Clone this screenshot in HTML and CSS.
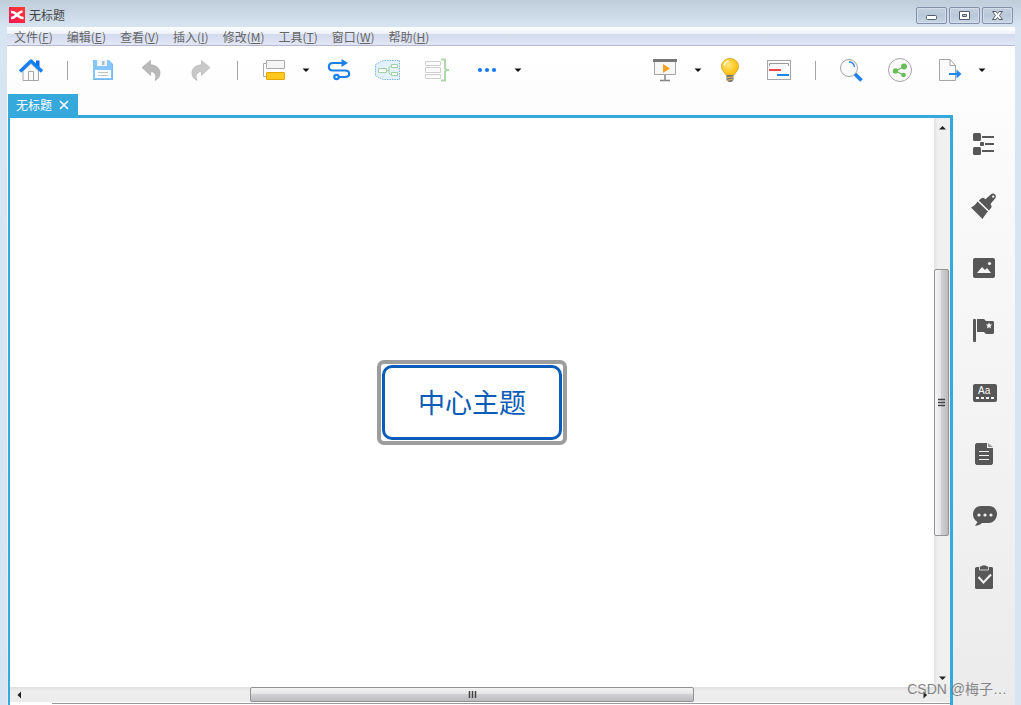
FILE: index.html
```html
<!DOCTYPE html>
<html lang="zh-CN">
<head>
<meta charset="utf-8">
<title>无标题</title>
<link rel="stylesheet" href="styles.css">
</head>
<body class="window">
<header class="titlebar">
  <svg class="logo" viewBox="0 0 16 16" aria-hidden="true"><defs><linearGradient id="lg" x1="0" x2="1" y1="1" y2="0"><stop offset="0" stop-color="#ff1456"/><stop offset="1" stop-color="#fb3a2c"/></linearGradient></defs><rect width="16" height="16" fill="url(#lg)"/><path d="M2 5c3-.5 4 1 6 2.800S11 11 14.500 11M13.500 4.500C11 4.500 9.500 6.500 8 7.800S5 11 2 11" fill="none" stroke="#fff" stroke-width="2.600"/></svg>
  <h1 class="title">无标题</h1>
  <div class="winbtns">
    <button class="winbtn" aria-label="最小化"><svg viewBox="0 0 15 13"><rect x="2.500" y="6.500" width="10" height="4" rx="1" fill="#fff" stroke="#555b6b"/></svg></button>
    <button class="winbtn" aria-label="最大化"><svg viewBox="0 0 15 13"><path d="M2.500 2.500h10v8h-10z" fill="#fff" stroke="#555b6b"/><path d="M5.500 5.500h4v2h-4z" fill="#b5c3d3" stroke="#555b6b"/></svg></button>
    <button class="winbtn" aria-label="关闭"><svg viewBox="0 0 15 13"><path d="M2.500 2.500h3.500l1.500 2 1.500-2h3.500l-3 4 3 4H9l-1.500-2-1.500 2H2.500l3-4z" fill="#fff" stroke="#555b6b"/></svg></button>
  </div>
</header>

<div class="app">
<nav class="menubar">
  <button class="menu">文件(<u>F</u>)</button>
  <button class="menu">编辑(<u>E</u>)</button>
  <button class="menu">查看(<u>V</u>)</button>
  <button class="menu">插入(<u>I</u>)</button>
  <button class="menu">修改(<u>M</u>)</button>
  <button class="menu">工具(<u>T</u>)</button>
  <button class="menu">窗口(<u>W</u>)</button>
  <button class="menu">帮助(<u>H</u>)</button>
</nav>

<div class="toolbar">
  <button class="tool" aria-label="主页"><svg viewBox="0 0 27 27"><path d="M5 14v9.500h15.500V14L13 6.500z" fill="#fafafa" stroke="#a8a8a8"/><path d="M10.500 23.500v-9h5v9" fill="none" stroke="#a8a8a8"/><path d="M18 3.500h3.500v6.500H18z" fill="#0f6be8"/><path d="M2 14.500 13 4l11 10.500" fill="none" stroke="#1580f4" stroke-width="3.400" stroke-linejoin="round"/></svg></button>
  <span class="sep"></span>
  <button class="tool" aria-label="保存"><svg viewBox="0 0 27 27"><path d="M3 3h16l4 4v16H3z" fill="#85c5fc"/><path d="M3.500 22.500h19V7" fill="none" stroke="#78b8f2"/><path d="M7 3h10v6H7z" fill="#eef7ff"/><path d="M12 4h2.500v4H12z" fill="#b9b9bb"/><path d="M5 13h16v8H5z" fill="#fff"/><path d="M8 15.500h10M8 18.500h10" stroke="#c3c3c3"/></svg></button>
  <button class="tool" aria-label="撤销"><svg viewBox="0 0 27 27"><path d="M3 10.500 11.500 3.500v4.300c6 .4 9.500 3.500 9.500 8.200 0 3-1.500 6-5 7.500 1.800-4.500.8-8.500-4.500-9v4z" fill="#bababa" stroke="#a9a9a9" stroke-width=".7"/></svg></button>
  <button class="tool" aria-label="重做"><svg viewBox="0 0 27 27"><path d="M22 10.500 13.500 3.500v4.300C7.500 8.200 4 11.300 4 16c0 3 1.500 6 5 7.500-1.800-4.500-.8-8.500 4.500-9v4z" fill="#c9c9c9" stroke="#b5b5b5" stroke-width=".7"/></svg></button>
  <span class="sep"></span>
  <button class="tool" aria-label="主题"><svg viewBox="0 0 27 27"><path d="M6 6.500H3.500v13H6" fill="none" stroke="#aaa"/><rect x="6.500" y="3.500" width="18" height="8" rx=".5" fill="#f5f5f5" stroke="#a8a8a8"/><rect x="6.500" y="15.500" width="18" height="7" rx=".5" fill="#ffc91f" stroke="#e9a500"/></svg></button>
  <button class="caret" aria-label="主题选项"><svg viewBox="0 0 8 5"><path d="M.5 .5h7L4 4z"/></svg></button>
  <button class="tool" aria-label="联系"><svg viewBox="0 0 27 27"><g fill="none" stroke="#1c80ea" stroke-width="2.200"><path d="M18 6H8c-5.500 0-5.500 7.500 0 7.500h12c5.500 0 5.500 6.500 0 6.500h-6"/><circle cx="11.500" cy="20" r="2.200"/></g><path d="M16.500 2l6.500 4-6.500 4z" fill="#1c80ea"/></svg></button>
  <button class="tool" aria-label="外框"><svg viewBox="0 0 27 27"><path d="M1.500 7.500 9 3.500h16.500v19H9L1.500 19z" fill="#e3f1fc" stroke="#7fb4e8" stroke-dasharray="1.500 1"/><g fill="#f7fcf8" stroke="#a0d0a2"><path d="M4.500 11.500h8v4h-8zM17.500 7.500h6v3h-6zM17.500 15.500h6v3h-6z"/><path d="M12.500 13.500h2.500M17.500 9h-1l-1.500 1.500V16l1.500 1.500h1" fill="none"/></g></svg></button>
  <button class="tool" aria-label="概要"><svg viewBox="0 0 27 27"><path d="M2.500 4.500h15v4h-15zM2.500 10.500h15v5h-15zM2.500 17.500h15v4h-15z" fill="#fbfbfb" stroke="#cfcfcf"/><path d="M18 2.500h4V11l1 2h3M18 23.500h4V15l1-2" fill="none" stroke="#acd8ac" stroke-width="2"/></svg></button>
  <button class="tool" aria-label="更多"><svg viewBox="0 0 27 27" fill="#1678ee"><circle cx="8" cy="13" r="2.100"/><circle cx="15" cy="13" r="2.100"/><circle cx="22" cy="13" r="2.100"/></svg></button>
  <button class="caret" aria-label="更多选项"><svg viewBox="0 0 8 5"><path d="M.5 .5h7L4 4z"/></svg></button>
  <span class="spring"></span>
  <button class="tool" aria-label="演示"><svg viewBox="0 0 27 27"><path d="M2.500 4.500h21v13h-21z" fill="#f7f7f7" stroke="#a4a4a4"/><path d="M1 2h24v3H1z" fill="#777"/><path d="M11 7l7 4.500-7 4.500z" fill="#f6a11f"/><path d="M13 18v5M8 23.500h10" stroke="#858585" stroke-width="1.500"/></svg></button>
  <button class="caret" aria-label="演示选项"><svg viewBox="0 0 8 5"><path d="M.5 .5h7L4 4z"/></svg></button>
  <button class="tool" aria-label="头脑风暴"><svg viewBox="0 0 27 27"><defs><radialGradient id="bg" cx=".4" cy=".4"><stop offset="0" stop-color="#ffe67a"/><stop offset="1" stop-color="#fdc41a"/></radialGradient></defs><path d="M13 1.500c-5 0-8.500 3.700-8.500 8 0 4 3 5.500 4.500 8.500h8c1.500-3 4.500-4.500 4.500-8.500 0-4.300-3.500-8-8.500-8z" fill="url(#bg)" stroke="#d9ac2c"/><path d="M7 8.500c.5-2.500 2-3.700 4.500-4.500" fill="none" stroke="#fff6cd" stroke-width="1.500"/><path d="M9.500 18h7v5l-2 2h-3l-2-2z" fill="#777"/><path d="m9 21 8-1.500M9.500 23.500l7-1.500" stroke="#e0be5c"/></svg></button>
  <button class="tool" aria-label="甘特图"><svg viewBox="0 0 27 27"><rect x="1.500" y="3.500" width="23" height="19" fill="#fbfbfb" stroke="#a5a5a5"/><path d="M3.500 9V6.500h19V9" fill="none" stroke="#999"/><path d="M3 13h12" stroke="#f14848" stroke-width="2"/><path d="M11 18h12" stroke="#1e86f0" stroke-width="2"/></svg></button>
  <span class="sep"></span>
  <button class="tool" aria-label="搜索"><svg viewBox="0 0 27 27"><circle cx="11" cy="11" r="8.500" fill="#fafafa" stroke="#a5a5a5"/><path d="M11 5c3 0 5 2 5.500 5" fill="none" stroke="#2186ee" stroke-width="1.300"/><path d="m17 17 6.500 6.500" stroke="#2081ea" stroke-width="3.700"/></svg></button>
  <button class="tool" aria-label="分享"><svg viewBox="0 0 27 27"><circle cx="13" cy="13" r="11.500" fill="#fafafa" stroke="#a5a5a5"/><path d="M17 9.500 8.500 14l8 4" fill="none" stroke="#68bd58" stroke-width="1.200"/><g fill="#68bd58"><circle cx="17" cy="9.500" r="3"/><circle cx="8.500" cy="14" r="2.700"/><circle cx="16.500" cy="18" r="2.300"/></g></svg></button>
  <button class="tool" aria-label="导出"><svg viewBox="0 0 27 27"><path d="M3.500 2.500h10.500l5.500 6v15h-16zM14 2.500v6h5.500" fill="#fafafa" stroke="#a5a5a5"/><path d="M13 17h9" stroke="#2186ee" stroke-width="2"/><path d="m20.500 12.500 5 4.500-5 4.500z" fill="#2186ee"/></svg></button>
  <button class="caret" aria-label="导出选项"><svg viewBox="0 0 8 5"><path d="M.5 .5h7L4 4z"/></svg></button>
</div>

<div class="workspace">
  <main class="editor">
    <div class="tabs"><div class="tab"><span>无标题</span><button class="tab-close" aria-label="关闭标签"><svg viewBox="0 0 10 10"><path d="m1 1 8 8M9 1 1 9" stroke="#fff" stroke-width="1.700"/></svg></button></div></div>
    <div class="pane">
      <div class="canvas"><button class="selection"><span class="topic">中心主题</span></button></div>
      <div class="vbar">
        <button class="vstep" aria-label="向上"><svg viewBox="0 0 8 5"><path d="M1 4.500h7L4.500 1z"/></svg></button>
        <div class="track"><div class="vthumb"><svg viewBox="0 0 8 9"><path d="M0 1.500h7M0 4.500h7M0 7.500h7" stroke="#444" stroke-width="1.500"/></svg></div></div>
        <button class="vstep" aria-label="向下"><svg viewBox="0 0 8 5"><path d="M1 .5h7L4.500 4z"/></svg></button>
      </div>
      <div class="hbar">
        <button class="hstep" aria-label="向左"><svg viewBox="0 0 5 8"><path d="M4 .5v7L.5 4z"/></svg></button>
        <div class="track"><div class="hthumb"><svg viewBox="0 0 9 8"><path d="M1.500 0v7M4.500 0v7M7.500 0v7" stroke="#444" stroke-width="1.500"/></svg></div></div>
        <button class="hstep" aria-label="向右"><svg viewBox="0 0 5 8"><path d="M.5 .5v7L4 4z"/></svg></button>
      </div>
      <div class="corner"></div>
      <div class="sheets"></div>
    </div>
  </main>
  <aside class="sidebar">
    <button class="side" aria-label="大纲"><svg viewBox="0 0 28 28"><rect x="3" y="3" width="8" height="8" rx="1.500"/><rect x="3" y="17" width="8" height="8" rx="1.500"/><rect x="10" y="12" width="4" height="4" rx="1"/><path d="M12 6h12v2H12zM15 13h9v2h-9zM12 20h12v2H12z"/></svg></button>
    <button class="side" aria-label="格式"><svg viewBox="0 0 28 28"><path d="M1 15.500c3-1.500 5-3.500 6.500-6l10.500 10c-2 2-3.500 4.500-5.500 7.500z"/><path d="m8.800 8.500 2.700-2.300c1-.7 2-.7 3 .3l1 .8 5.500-5c2.500-2.300 6.500 1 4.300 4L20.500 12l.5 1c.8 1 .8 2 0 3L19 18.500z"/><circle cx="23.200" cy="4.600" r="1.200" fill="#f9f9f9"/></svg></button>
    <button class="side" aria-label="图片"><svg viewBox="0 0 28 28"><rect x="3" y="4" width="22" height="20" rx="2"/><path d="m7 19 5-6 3 3 2-2 4 5z" fill="#f7f7f7"/><circle cx="19.500" cy="9.500" r="1.600" fill="#f7f7f7"/></svg></button>
    <button class="side" aria-label="图标"><svg viewBox="0 0 28 28"><rect x="3" y="3" width="3" height="23" rx="1"/><path d="M7 3h7l2 2h7l1 1v11l-1 1h-7l-2-2H7z"/><path d="m19 6.500 1 2h2.200l-1.700 1.700.6 2.300-2.100-1.200-2.100 1.200.6-2.300-1.700-1.700H18z" fill="#f5f5f5"/></svg></button>
    <button class="side" aria-label="标签"><svg viewBox="0 0 28 28"><rect x="3" y="6" width="24" height="18" rx="2"/><text class="glyph" x="8" y="16">Aa</text><path d="M6 20h18" stroke="#fff" stroke-width="2" stroke-dasharray="3 2"/></svg></button>
    <button class="side" aria-label="备注"><svg viewBox="0 0 28 28"><path d="M6.500 3H17v5h6v15.500L21.500 25h-15L5 23.500v-19z"/><path d="m18 3 5 4h-5z" fill="#999"/><path d="M9 11.500h10M9 15.500h10M9 19.500h10" stroke="#f3f3f3"/></svg></button>
    <button class="side" aria-label="批注"><svg viewBox="0 0 28 28"><path d="M11 4h8c4.500 0 8 3.500 8 8s-3.500 9-8 9h-7c-2 2-4 2.500-7 2.700L7.500 20C4.500 18 3 15.500 3 12.500 3 7.500 6.500 4 11 4z"/><g fill="#f2f2f2"><circle cx="9" cy="13" r="1.600"/><circle cx="15" cy="13" r="1.600"/><circle cx="21" cy="13" r="1.600"/></g></svg></button>
    <button class="side" aria-label="任务"><svg viewBox="0 0 28 28"><path d="M6.500 3H22l1 1v20l-1 1H6l-1-1V4z"/><path d="M9.500 2h2l1-1h3l1 1h2v4h-9z" stroke="#eee" stroke-width=".8"/><path d="m8.500 13 5 5.500 7.500-8" fill="none" stroke="#f2f2f2" stroke-width="2"/></svg></button>
  </aside>
</div>
</div>
<p class="watermark">CSDN @梅子…</p>
</body>
</html>
```

FILE: styles.css
```css
* { box-sizing: border-box; }
button {
  display: flex;
  align-items: center;
  justify-content: center;
  margin: 0;
  padding: 0;
  border: 0;
  background: none;
  color: inherit;
  font: inherit;
}
.window {
  display: flex;
  flex-direction: column;
  height: 100vh;
  margin: 0;
  padding: 0 6px 0 7px;
  overflow: hidden;
  position: relative;
  background: linear-gradient(#bfcddb, #d7e4f1 27px);
  color: #666;
  font: 12px/18px "Noto Sans CJK SC", sans-serif;
}
.titlebar {
  display: flex;
  align-items: center;
  gap: 4px;
  height: 27px;
  padding: 3px 2px 0;
  flex: none;
}
.logo { width: 16px; height: 16px; }
.title { margin: 0; flex: 1; font-size: 12px; font-weight: 400; color: #444; }
.winbtns { display: flex; gap: 2px; }
.winbtn {
  width: 31px;
  height: 17px;
  border: 1px solid #8390a9;
  border-radius: 2px;
  background: linear-gradient(#c3d0de, #b9c8d8 50%, #c9d7e5);
  box-shadow: inset 0 0 0 1px #d3deea;
}
.winbtn svg { width: 15px; height: 13px; }

.app {
  display: flex;
  flex-direction: column;
  flex: 1;
  min-height: 0;
  background: linear-gradient(#fff 20px, #fbfbfb 110px, #ebebeb);
}
.menubar {
  display: flex;
  gap: 14px;
  height: 19px;
  flex: none;
  padding: 1px 7px 0;
  border-bottom: 1px solid #b6b7d2;
  background: linear-gradient(#fff, #edf1f8 7px, #d3daed 7px, #e2e7f6);
}
.toolbar {
  display: flex;
  align-items: center;
  height: 48px;
  flex: none;
  padding-right: 25px;
}
.tool { width: 49px; height: 47px; }
.tool svg { width: 27px; height: 27px; }
.caret { width: 16px; height: 47px; }
.caret svg { width: 8px; height: 5px; fill: #111; }
.sep { display: flex; justify-content: center; width: 23px; }
.sep::before { content: ""; width: 1px; height: 19px; background: #a5a5a5; }
.spring { flex: 1; }

.workspace { display: flex; flex: 1; min-height: 0; }
.editor { display: flex; flex-direction: column; flex: 1; min-width: 0; padding-left: 1px; }
.tabs { display: flex; height: 21px; flex: none; }
.tab {
  display: flex;
  align-items: center;
  gap: 7px;
  padding: 0 9px 0 8px;
  background: #35a8dc;
  color: #fff;
}
.tab-close svg { width: 10px; height: 10px; }
.pane {
  display: grid;
  grid-template: 1fr 15px 3px / 1fr 16px;
  flex: 1;
  min-height: 0;
  border: solid #35a8dc;
  border-width: 3px 3px 0 2px;
  background: #fff;
}
.canvas { display: grid; place-items: center; }
.selection { padding: 1px; border: 4px solid #9d9d9d; border-radius: 7px; }
.topic {
  padding: 16px 33px 18px;
  border: 3px solid #0a5cb8;
  border-radius: 10px;
  color: #0a5cb8;
  font-size: 27px;
  line-height: 35px;
}
.vbar { display: flex; flex-direction: column; padding-right: 1px; background: linear-gradient(90deg, #e3e3e3, #f0f0f0 4px); }
.hbar { display: flex; background: linear-gradient(#e0e0e0, #ededed 4px); }
.corner { background: #ececec; }
.vstep { height: 18px; }
.hstep { width: 18px; }
.vstep svg { width: 8px; height: 5px; fill: #222; }
.hstep svg { width: 5px; height: 8px; fill: #222; }
.track { display: flex; align-items: center; justify-content: center; flex: 1; min-height: 0; }
.vthumb, .hthumb {
  display: flex;
  align-items: center;
  justify-content: center;
  border: 1px solid #929292;
  border-radius: 2px;
}
.vthumb { width: 15px; height: 50%; background: linear-gradient(90deg, #f6f6f6, #e5e5e7 45%, #d0d0d3 50%, #bcbcc0); }
.hthumb { width: 50%; height: 15px; background: linear-gradient(#f4f4f4, #e5e5e7 45%, #d0d0d3 50%, #bcbcc0); }
.vthumb svg { width: 8px; height: 9px; }
.hthumb svg { width: 9px; height: 8px; }
.sheets { grid-column: 1 / -1; margin: 1px 0 0 42px; border-top: 1px solid #999; }

.sidebar { width: 62px; flex: none; padding-top: 19px; }
.side { width: 62px; height: 62px; }
.side svg { width: 28px; height: 28px; fill: #575757; }
.side .glyph { fill: #fff; font: 10px "Liberation Sans", sans-serif; }
.watermark {
  position: absolute;
  right: 14px;
  bottom: 6px;
  margin: 0;
  color: #858585;
  font: 14px/20px "Liberation Sans", "Noto Sans CJK SC", sans-serif;
}
```
